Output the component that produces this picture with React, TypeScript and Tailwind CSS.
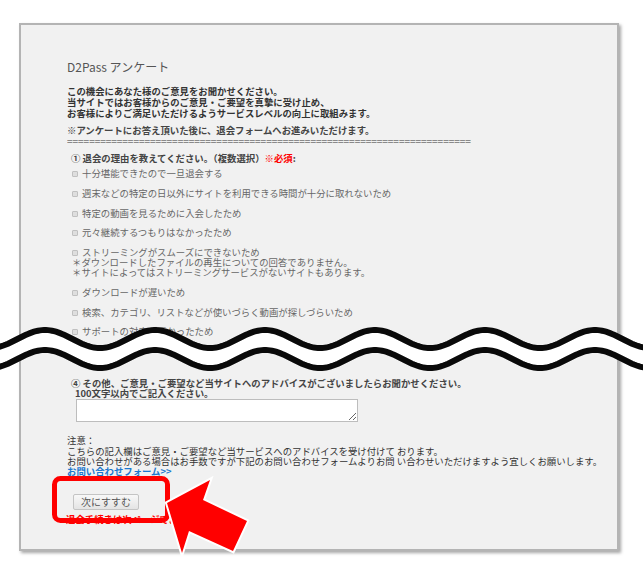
import React from "react";

const reasons: string[][] = [
  ["十分堪能できたので一旦退会する"],
  ["週末などの特定の日以外にサイトを利用できる時間が十分に取れないため"],
  ["特定の動画を見るために入会したため"],
  ["元々継続するつもりはなかったため"],
  [
    "ストリーミングがスムーズにできないため",
    "＊ダウンロードしたファイルの再生についての回答でありません。",
    "＊サイトによってはストリーミングサービスがないサイトもあります。",
  ],
  ["ダウンロードが遅いため"],
  ["検索、カテゴリ、リストなどが使いづらく動画が探しづらいため"],
  ["サポートの対応が悪かったため"],
];

// torn-page wave drawn over the middle of the form
const Wave = () => {
  const line = (off: number) => {
    const pts: string[] = [];
    for (let x = -10; x <= 655; x += 2) {
      const y = 339 + off - 9 * Math.cos((2 * Math.PI * (x - 45)) / 110);
      pts.push(`${x},${y.toFixed(2)}`);
    }
    return pts;
  };
  const upper = line(0);
  const lower = line(20);
  const band = [...upper, ...lower.slice().reverse()].join(" ");
  return (
    <svg
      className="absolute left-0 top-0 pointer-events-none"
      width={643}
      height={580}
      viewBox="0 0 643 580"
    >
      <polygon points={band} fill="#ffffff" />
      <polyline points={upper.join(" ")} fill="none" stroke="#0a0a0a" strokeWidth={6} />
      <polyline points={lower.join(" ")} fill="none" stroke="#0a0a0a" strokeWidth={6} />
    </svg>
  );
};

const Callout = () => (
  <svg
    className="absolute left-0 top-0 pointer-events-none"
    width={643}
    height={580}
    viewBox="0 0 643 580"
  >
    <rect
      x={54.5}
      y={478.5}
      width={113}
      height={42}
      rx={6}
      fill="none"
      stroke="#ff0000"
      strokeWidth={5}
    />
    <polygon
      points="167,503 210,480 203,500 247,521 233,551 189,531 182,553"
      fill="#ff0000"
      stroke="#ffffff"
      strokeWidth={4}
      strokeLinejoin="miter"
      paintOrder="stroke"
    />
  </svg>
);

export default function App() {
  return (
    <div className="relative w-[643px] h-[580px] overflow-hidden bg-white font-['Noto_Sans_CJK_JP','Noto_Sans',sans-serif] text-[9.4px]">
      <div className="ml-[19px] mt-[23px] w-[600px] h-[528px] border-2 border-[#b4b4b4] bg-[#f1f1f1] shadow-[2px_2px_3px_rgba(0,0,0,0.35)]">
        <div className="pl-[46px] pt-[35px]">
          <div className="text-[12px] leading-[14px] text-[#555]">D2Pass アンケート</div>

          <div className="mt-[12px] leading-[11px] font-bold text-[#333]">
            <p>この機会にあなた様のご意見をお聞かせください。</p>
            <p>当サイトではお客様からのご意見・ご要望を真摯に受け止め、</p>
            <p>お客様によりご満足いただけるようサービスレベルの向上に取組みます。</p>
          </div>

          <p className="mt-[6px] leading-[11px] font-bold text-[#444]">
            ※アンケートにお答え頂いた後に、退会フォームへお進みいただけます。
          </p>
          <div className="w-[404px] overflow-hidden whitespace-nowrap leading-[10px] font-bold text-[#8a8a8a]">
            {"=".repeat(74)}
          </div>

          <p className="mt-[7px] ml-[4px] leading-[11px] font-bold text-[#444]">
            ① 退会の理由を教えてください。（複数選択）<span className="text-[#ff0000]">※必須</span>:
          </p>

          <ul className="mt-[5px] ml-[5px] flex flex-col gap-[9.9px] leading-[9.9px] text-[#666]">
            {reasons.map((lines, i) => (
              <li key={i}>
                <div className="flex items-center">
                  <span className="mr-[4px] w-[6px] h-[6px] rounded-[1px] border border-[#c0c0c0] bg-[#dedede]" />
                  <span>{lines[0]}</span>
                </div>
                {lines.slice(1).map((l) => (
                  <div key={l}>{l}</div>
                ))}
              </li>
            ))}
          </ul>

          <p className="mt-[41px] ml-[4px] leading-[10px] font-bold text-[#444]">
            ④ その他、ご意見・ご要望など当サイトへのアドバイスがございましたらお聞かせください。
          </p>
          <p className="ml-[8px] leading-[10px] font-bold text-[#444]">100文字以内でご記入ください。</p>
          <textarea className="block mt-[1px] ml-[9px] w-[282px] h-[23px] resize border border-[#bdbdbd] bg-white" />

          <div className="mt-[13px] leading-[10.2px] text-[#333]">
            <p>注意：</p>
            <p>こちらの記入欄はご意見・ご要望など当サービスへのアドバイスを受け付けて おります。</p>
            <p>お問い合わせがある場合はお手数ですが下記のお問い合わせフォームよりお問 い合わせいただけますよう宜しくお願いします。</p>
            <a className="font-bold text-[#1a78cf]">お問い合わせフォーム&gt;&gt;</a>
          </div>

          <button className="mt-[18px] ml-[6px] w-[66px] h-[16px] rounded-[2px] border border-[#c4c4c4] bg-gradient-to-b from-[#f8f8f8] to-[#e4e4e4] text-[10px] leading-[14px] text-[#555]">
            次にすすむ
          </button>
          <p className="mt-[4px] -ml-[1px] leading-[10px] font-bold text-[#ff0000]">
            退会手続きは次ページでお願いします
          </p>
        </div>
      </div>
      <Wave />
      <Callout />
    </div>
  );
}
